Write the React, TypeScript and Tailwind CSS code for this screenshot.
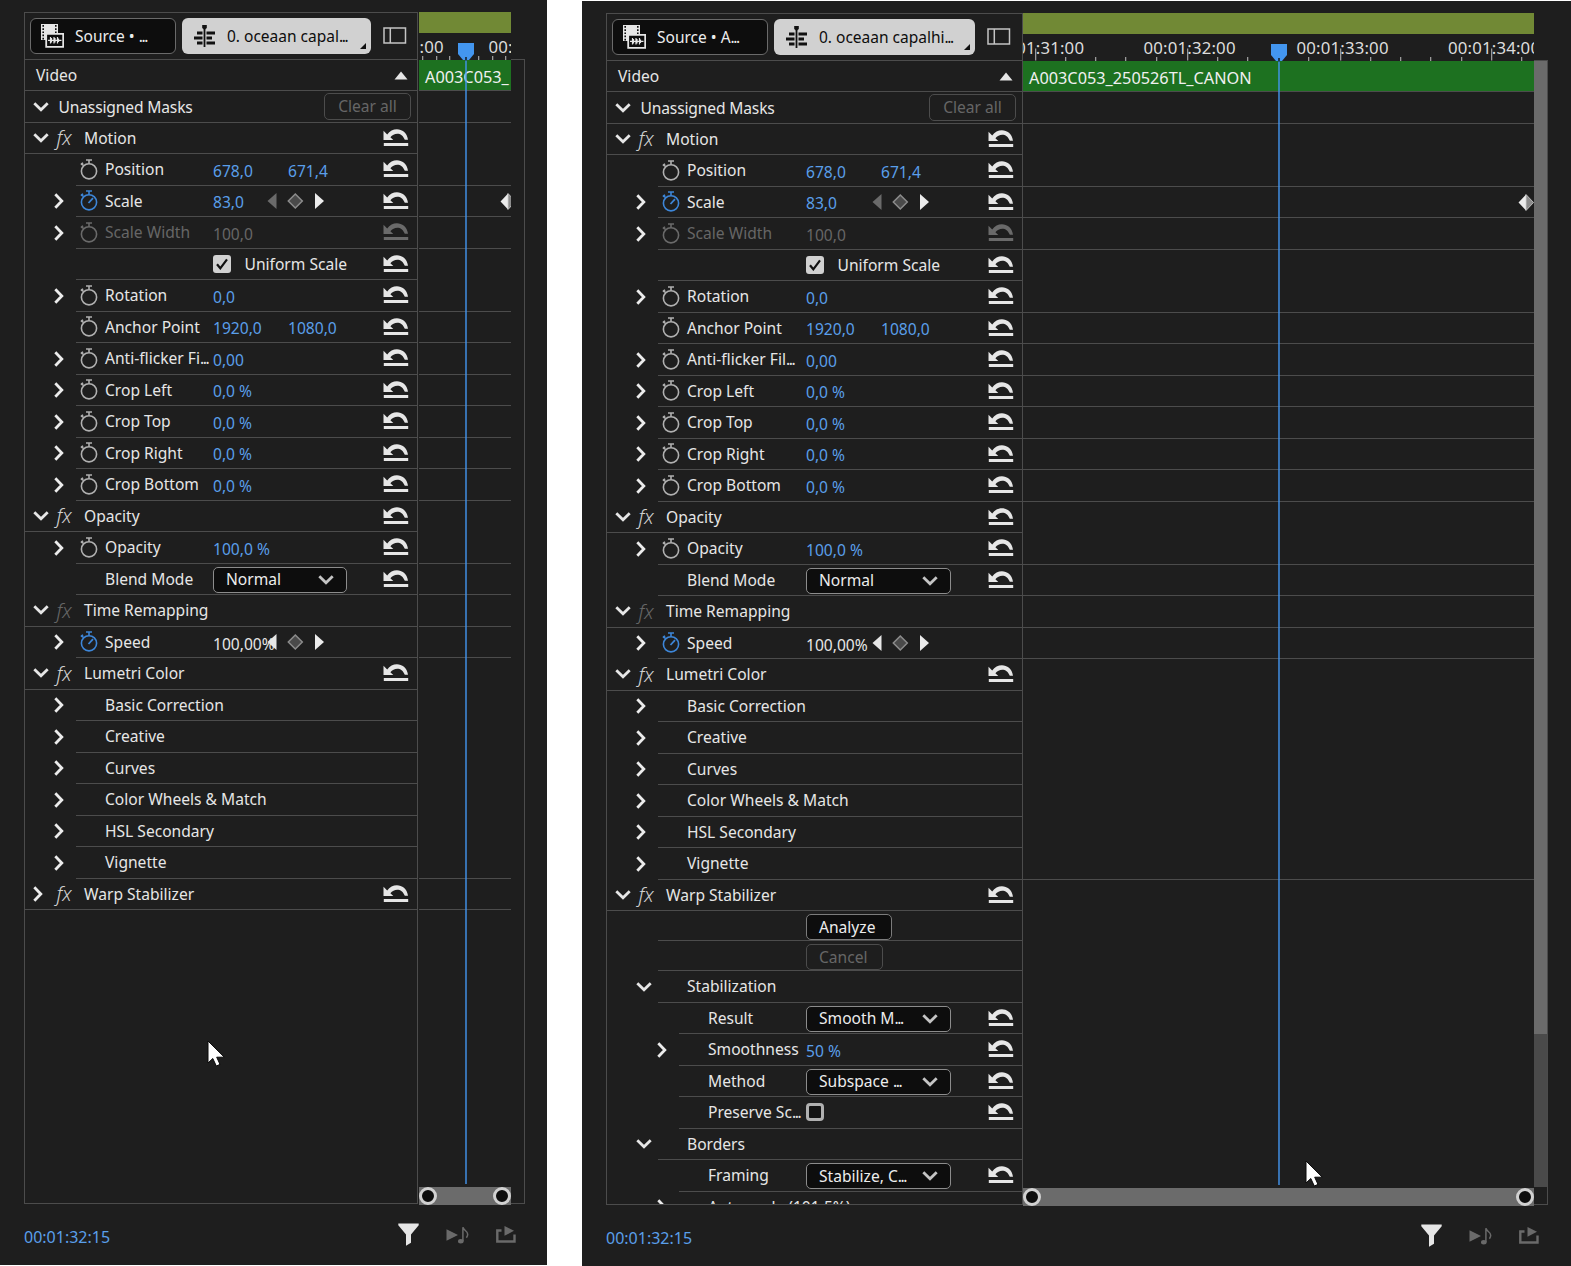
import { clsx } from 'clsx';

type Side = 'left' | 'right';

interface Row {
    kind: 'section' | 'prop' | 'group' | 'sub' | 'button';
    label: string;
    open?: boolean;
    chevron?: boolean;
    fx?: 'on' | 'off';
    watch?: 'on' | 'off';
    reset?: boolean;
    disabled?: boolean;
    values?: string[];
    plain?: boolean;
    nav?: 'next' | 'both';
    select?: string;
    check?: 'on' | 'off';
    // rule drawn under this row on the timeline side
    rule?: boolean;
    keyframe?: boolean;
}

const baseRows: Row[] = [
    { kind: 'section', label: 'Motion', open: true, fx: 'on', reset: true },
    { kind: 'prop', label: 'Position', watch: 'off', values: ['678,0', '671,4'], reset: true, rule: true },
    { kind: 'prop', label: 'Scale', chevron: true, watch: 'on', values: ['83,0'], nav: 'next', reset: true, rule: true, keyframe: true },
    { kind: 'prop', label: 'Scale Width', chevron: true, watch: 'off', values: ['100,0'], disabled: true, reset: true, rule: true },
    { kind: 'prop', label: '', check: 'on', values: ['Uniform Scale'], reset: true },
    { kind: 'prop', label: 'Rotation', chevron: true, watch: 'off', values: ['0,0'], reset: true, rule: true },
    { kind: 'prop', label: 'Anchor Point', watch: 'off', values: ['1920,0', '1080,0'], reset: true, rule: true },
    { kind: 'prop', label: 'Anti-flicker Fi...', chevron: true, watch: 'off', values: ['0,00'], reset: true, rule: true },
    { kind: 'prop', label: 'Crop Left', chevron: true, watch: 'off', values: ['0,0 %'], reset: true, rule: true },
    { kind: 'prop', label: 'Crop Top', chevron: true, watch: 'off', values: ['0,0 %'], reset: true, rule: true },
    { kind: 'prop', label: 'Crop Right', chevron: true, watch: 'off', values: ['0,0 %'], reset: true, rule: true },
    { kind: 'prop', label: 'Crop Bottom', chevron: true, watch: 'off', values: ['0,0 %'], reset: true, rule: true },
    { kind: 'section', label: 'Opacity', open: true, fx: 'on', reset: true },
    { kind: 'prop', label: 'Opacity', chevron: true, watch: 'off', values: ['100,0 %'], reset: true, rule: true },
    { kind: 'prop', label: 'Blend Mode', select: 'Normal', reset: true, rule: true },
    { kind: 'section', label: 'Time Remapping', open: true, fx: 'off', rule: true },
    { kind: 'prop', label: 'Speed', chevron: true, watch: 'on', values: ['100,00%'], plain: true, nav: 'both', rule: true },
    { kind: 'section', label: 'Lumetri Color', open: true, fx: 'on', reset: true },
    { kind: 'prop', label: 'Basic Correction', chevron: true },
    { kind: 'prop', label: 'Creative', chevron: true },
    { kind: 'prop', label: 'Curves', chevron: true },
    { kind: 'prop', label: 'Color Wheels & Match', chevron: true },
    { kind: 'prop', label: 'HSL Secondary', chevron: true },
    { kind: 'prop', label: 'Vignette', chevron: true, rule: true },
];

const leftRows: Row[] = [
    ...baseRows,
    { kind: 'section', label: 'Warp Stabilizer', fx: 'on', reset: true, rule: true },
];

const rightRows: Row[] = [
    ...baseRows.map((r) => (r.label === 'Anti-flicker Fi...' ? { ...r, label: 'Anti-flicker Fil...' } : r)),
    { kind: 'section', label: 'Warp Stabilizer', open: true, fx: 'on', reset: true },
    { kind: 'button', label: 'Analyze' },
    { kind: 'button', label: 'Cancel', disabled: true },
    { kind: 'group', label: 'Stabilization' },
    { kind: 'sub', label: 'Result', select: 'Smooth M...', reset: true },
    { kind: 'sub', label: 'Smoothness', chevron: true, values: ['50 %'], reset: true },
    { kind: 'sub', label: 'Method', select: 'Subspace ...', reset: true },
    { kind: 'sub', label: 'Preserve Sc...', check: 'off', reset: true },
    { kind: 'group', label: 'Borders' },
    { kind: 'sub', label: 'Framing', select: 'Stabilize, C...', reset: true },
    { kind: 'sub', label: 'Auto-scale (101,5%)', chevron: true },
];

const Txt = ({ children }: { children: string }) =>
    children.endsWith('...') ? (
        <>
            {children.slice(0, -3)}
            <span className="tracking-[-1.4px]">...</span>
        </>
    ) : (
        <>{children}</>
    );

const ChevronDown = ({ className }: { className?: string }) => (
    <svg className={clsx('shrink-0', className)} width="16" height="10" viewBox="0 0 16 10" fill="none">
        <path d="M1.3 1.3 8 7.8l6.7-6.5" stroke="currentColor" strokeWidth="2.8" />
    </svg>
);

const ChevronRight = () => (
    <svg className="shrink-0 text-[#ececec]" width="10" height="16" viewBox="0 0 10 16" fill="none">
        <path d="M1.3 1.3 7.8 8l-6.5 6.7" stroke="currentColor" strokeWidth="2.8" />
    </svg>
);

const ResetIcon = ({ dim }: { dim?: boolean }) => (
    <svg className={clsx('shrink-0', dim ? 'text-[#6a6a6a]' : 'text-[#e6e6e6]')} width="26" height="18" viewBox="0 0 26 18">
        <path d="M.5 1.800V11h9.800L7.400 8.200C11.200 3.300 19 2.800 21.800 10.800h3.200C23.300-1.300 9.800-2.600 4.200 5.500z" fill="currentColor" />
        <path d="M.8 14h24.400v3H.8z" fill="currentColor" />
    </svg>
);

const Stopwatch = ({ on, dim }: { on?: boolean; dim?: boolean }) => (
    <svg
        className={clsx('shrink-0', on ? 'text-[#3d86d8]' : dim ? 'text-[#6a6a6a]' : 'text-[#b0b0b0]')}
        width="18"
        height="21"
        viewBox="0 0 18 21"
        fill="none"
        stroke="currentColor"
        strokeWidth="1.6"
    >
        <circle cx="9" cy="12.3" r="7.6" />
        <path d="M6 1h6M9 1v3.5M1 4.300l2.500 2.200M1 5.800l2-2" />
        {on && <path d="m8.500 13 4.500-4.800" strokeWidth="1.8" />}
    </svg>
);

const NavButtons = ({ mode }: { mode: 'next' | 'both' }) => (
    <svg className="shrink-0" width="58" height="18" viewBox="0 0 58 18">
        <path d="M9.500 1v16L.5 9z" fill={mode === 'both' ? '#e6e6e6' : '#6a6a6a'} />
        <path d="m28.300 2 7 7-7 7-7-7z" fill="#4a4a4a" stroke="#8c8c8c" strokeWidth="1.5" />
        <path d="M48 1v16l9-8z" fill="#ececec" />
    </svg>
);

const Check = ({ on }: { on: boolean }) =>
    on ? (
        <div className="flex size-[18px] shrink-0 items-center justify-center rounded-[3px] bg-[#d1d1d1]">
            <svg width="12" height="12" viewBox="0 0 12 12" fill="none">
                <path d="m1 6.300 3.300 4L11 1.300" stroke="#111" strokeWidth="2.2" />
            </svg>
        </div>
    ) : (
        <div className="size-[18px] shrink-0 rounded-[4px] border-[3px] border-[#b0b0b0] bg-[#131313]" />
    );

const Select = ({ text, side }: { text: string; side: Side }) => (
    <div
        className={clsx(
            'mt-[2px] flex h-[26px] shrink-0 items-center justify-between rounded-[5px] border border-[#8c8c8c] bg-[#0d0d0d] pr-3 pl-3 text-[#ececec]',
            side === 'left' ? 'w-[134px]' : 'w-[145px]',
        )}
    >
        <span className="pt-px">
            <Txt>{text}</Txt>
        </span>
        <ChevronDown className="text-[#c4c4c4]" />
    </div>
);

const EffectRow = ({ row, side }: { row: Row; side: Side }) => {
    const tone = row.disabled ? 'text-[#666]' : 'text-[#e6e6e6]';

    if (row.kind === 'section') {
        return (
            <div className={clsx('flex h-[31.5px] shrink-0 items-center border-b border-[#4c4c4c] pr-[8px]', tone)}>
                <div className="flex w-[31.5px] shrink-0 pl-[7.5px]">
                    {row.open ? <ChevronDown /> : <ChevronRight />}
                </div>
                <div
                    className={clsx(
                        'w-[27.5px] shrink-0 pt-px text-[20px] leading-none font-light italic',
                        row.fx === 'off' ? 'text-[#666]' : 'text-[#d0d0d0]',
                    )}
                >
                    fx
                </div>
                <div className="flex-1 pt-[1.6px]">{row.label}</div>
                {row.reset && <ResetIcon />}
            </div>
        );
    }

    const deep = row.kind === 'sub';
    return (
        <div className={clsx('flex shrink-0', row.kind === 'button' ? 'h-[30px]' : 'h-[31.5px]', tone)}>
            <div className={clsx('flex shrink-0 items-center', deep ? 'w-[72px] pl-[49.5px]' : 'w-[51px] pl-[28.5px]')}>
                {row.chevron && <ChevronRight />}
                {row.kind === 'group' && <ChevronDown />}
            </div>
            <div className="flex min-w-0 flex-1 items-center border-b border-[#4c4c4c] pr-[8px]">
                <div
                    className={clsx(
                        'flex shrink-0 items-center whitespace-nowrap',
                        deep ? 'w-[127px] pl-[29px]' : side === 'left' ? 'w-[137px]' : 'w-[148px]',
                    )}
                >
                    {!deep && (
                        <div className="w-[29px] shrink-0 pl-[3.5px]">
                            {row.watch && <Stopwatch on={row.watch === 'on'} dim={row.disabled} />}
                        </div>
                    )}
                    {row.kind !== 'button' && (
                        <span className="pt-[1.6px]">
                            <Txt>{row.label}</Txt>
                        </span>
                    )}
                </div>
                {row.kind === 'button' && (
                    <div
                        className={clsx(
                            'mt-[3px] flex h-[26px] items-center rounded-[5px] border pt-px pl-3',
                            row.disabled ? 'w-[77px] border-[#4c4c4c]' : 'w-[86px] border-[#7c7c7c] bg-[#0d0d0d] text-[#ececec]',
                        )}
                    >
                        {row.label}
                    </div>
                )}
                {row.select && <Select text={row.select} side={side} />}
                {row.check && <Check on={row.check === 'on'} />}
                <div
                    className={clsx(
                        'flex min-w-0 flex-1 whitespace-nowrap',
                        row.check ? 'pt-[1.6px] pl-[13.5px]' : row.plain ? 'pt-[6px]' : 'pt-[4.5px]',
                        !row.disabled && !row.plain && !row.check && 'text-[#5a9fea]',
                    )}
                >
                    {row.values?.map((v) => (
                        <span key={v} className={row.values!.length > 1 ? 'w-[75px] shrink-0' : row.check ? '' : 'word-spacing'}>
                            {v}
                        </span>
                    ))}
                </div>
                {row.nav && (
                    <div className={clsx('flex', row.reset ? 'pr-[58px]' : 'pr-[84px]')}>
                        <NavButtons mode={row.nav} />
                    </div>
                )}
                {row.reset && <ResetIcon dim={row.disabled} />}
            </div>
        </div>
    );
};

const Header = ({ side }: { side: Side }) => (
    <div className="flex h-[47.5px] shrink-0 items-center border-t border-b border-[#4c4c4c] pl-[5px] text-[15.5px]">
        <div
            className={clsx(
                'flex h-9 items-center gap-[11px] rounded-[6px] border border-[#6a6a6a] bg-[#0d0d0d] pl-[10px] whitespace-nowrap text-[#ececec]',
                side === 'left' ? 'w-[146px]' : 'w-[156px]',
            )}
        >
            <svg width="23" height="24" viewBox="0 0 23 24">
                <path d="M0 0h17v16H0z" fill="#e6e6e6" />
                <path d="M2.200 1v15M14.800 1v8" stroke="#0d0d0d" strokeWidth="1.6" strokeDasharray="1.7 1.5" />
                <path d="M5.200 9.800h17v13h-17z" fill="#0d0d0d" stroke="#e6e6e6" strokeWidth="1.8" />
                <path d="M7 16.300h13.500M9.500 13v6.500M10.500 14v4.500M13 13v6.500M14 14v4.500M16.500 13v6.500M17.500 14.500v3.500" stroke="#e6e6e6" strokeWidth="1.2" />
            </svg>
            <span className="pt-[2px]">
                <Txt>{side === 'left' ? 'Source • ...' : 'Source • A...'}</Txt>
            </span>
        </div>
        <div
            className={clsx(
                'relative ml-[6px] flex h-9 items-center gap-[11px] rounded-[6px] bg-[#d1d1d1] pl-3 whitespace-nowrap text-[#0d0d0d]',
                side === 'left' ? 'w-[189px]' : 'w-[201px]',
            )}
        >
            <svg width="22" height="22" viewBox="0 0 22 22" fill="none" stroke="#111">
                <path d="M10.500 4v18" strokeWidth="1.8" />
                <path d="M8.200 0h4.600v3l-2.300 2-2.300-2z" fill="#111" stroke="none" />
                <path d="M3 8h5.500M12.500 8H21M0 13h8.500M12.500 13H18M3 18h5.500M12.500 18H21" strokeWidth="2.8" />
            </svg>
            <span className="pt-[2px]">
                <Txt>{side === 'left' ? '0. oceaan capal...' : '0. oceaan capalhi...'}</Txt>
            </span>
            <svg className="absolute right-[5px] bottom-[5px]" width="6" height="6" viewBox="0 0 6 6">
                <path d="M6 0v6H0z" fill="#111" />
            </svg>
        </div>
        <svg className="ml-3" width="24" height="17" viewBox="0 0 24 17" fill="none" stroke="#c4c4c4" strokeWidth="1.5">
            <path d="M1 1h21.500v15H1zM7.300 1v15" />
        </svg>
    </div>
);

const rulers = {
    left: {
        labels: [
            { x: 0.5, text: ':00', length: 24 },
            { x: 69.5, text: '00:01:33:00', length: 92 },
        ],
        ticks: [3, 17, 30, 59, 73, 86],
        big: [] as number[],
        head: 47,
    },
    right: {
        labels: [
            { x: -31, text: '00:01:31:00', length: 92 },
            { x: 120.5, text: '00:01:32:00', length: 92 },
            { x: 273.5, text: '00:01:33:00', length: 92 },
            { x: 425, text: '00:01:34:00', length: 92 },
        ],
        ticks: [42, 72, 102, 133, 194, 224, 285, 347, 377, 407, 438, 498],
        big: [12, 164, 317, 468],
        head: 256,
    },
};

const Timeline = ({ rows, side }: { rows: Row[]; side: Side }) => {
    const ruler = rulers[side];
    return (
        <div className={clsx('relative flex h-[1193px] shrink-0 flex-col overflow-hidden', side === 'left' ? 'ml-px w-[92px]' : 'w-[511px]')}>
            <div className="h-[21px] shrink-0 bg-[#718935]" />
            <svg className="h-[26.5px] w-full shrink-0" fill="#dcdcdc">
                {ruler.labels.map((l) => (
                    <text key={l.text} x={l.x} y="19.8" fontSize="16.8" textLength={l.length}>
                        {l.text}
                    </text>
                ))}
                {ruler.ticks.map((x) => (
                    <rect key={x} x={x} y="23" width="1.3" height="4" fill="#9a9a9a" />
                ))}
                {ruler.big.map((x) => (
                    <rect key={x} x={x} y="14.5" width="1.3" height="12" fill="#9a9a9a" />
                ))}
            </svg>
            <div className="flex h-[31.5px] shrink-0 items-center border-b border-[#4c4c4c] bg-[#1d7120] pt-[5px] pl-[6px] text-[16.3px] whitespace-nowrap text-[#f0f0f0]">
                {side === 'left' ? 'A003C053_' : 'A003C053_250526TL_CANON'}
            </div>
            <div className="h-[31.5px] shrink-0 border-b border-[#4c4c4c]" />
            {rows.slice(0, 25).map((row, i) => (
                <div key={i} className={clsx('flex h-[31.5px] shrink-0 items-center border-b', row.rule ? 'border-[#4c4c4c]' : 'border-transparent')}>
                    {row.keyframe && (
                        <svg className={clsx('mt-[2px] ml-auto shrink-0', side === 'left' && '-mr-[5px]')} width="16" height="17" viewBox="0 0 16 17">
                            <path d="M8 .5v16L.5 8.500z" fill="#ececec" />
                            <path d="M8 .5v16l7.500-8z" fill="#8c8c8c" stroke="#d0d0d0" strokeWidth=".8" />
                        </svg>
                    )}
                </div>
            ))}
            <div className="mt-auto flex h-[18px] shrink-0 items-center justify-between bg-[#6b6b6b]">
                <div className="size-[18px] rounded-full border-[3px] border-[#d1d1d1] bg-[#0d0d0d]" />
                <div className="size-[18px] rounded-full border-[3px] border-[#d1d1d1] bg-[#0d0d0d]" />
            </div>
            <svg className="absolute top-[31px] h-[1141px] w-[18px]" style={{ left: ruler.head - 9 }}>
                <path d="M1 0h16v11l-5 6H6L1 11z" fill="#4396ef" />
                <path d="M9 17v1124" stroke="#4396ef" strokeWidth="1.4" />
                <path d="M9 14v3.500" stroke="#111" strokeWidth="1.4" />
            </svg>
        </div>
    );
};

const Footer = ({ side }: { side: Side }) => (
    <div className={clsx('flex h-[61px] shrink-0 items-center text-[#6a6a6a]', side === 'left' ? 'w-[492px]' : 'w-[933px]')}>
        <div className="flex-1 pt-[4px] text-[16px] text-[#5a9fea]">00:01:32:15</div>
        <svg width="21" height="23" viewBox="0 0 21 23">
            <path d="M.3.500h20.400v1.800L13 11.500v8.300l-5 3V11.500L.3 2.300z" fill="#e6e6e6" />
        </svg>
        <svg className="ml-[27px]" width="23" height="18" viewBox="0 0 23 18">
            <path d="M.5 3.300 12 9 .5 14.700z" fill="currentColor" />
            <ellipse cx="14.8" cy="15.2" rx="2.8" ry="2.2" fill="currentColor" />
            <path d="M16.900 15V1.200c.5 3.300 4.600 3.500 4.800 7 0 1.500-.6 2.600-1.300 3.500" fill="none" stroke="currentColor" strokeWidth="1.5" />
        </svg>
        <svg className="-mt-px ml-[27px]" width="20" height="17" viewBox="0 0 20 17">
            <path d="M5.500 4.500H1.300v11h17.200v-7" fill="none" stroke="currentColor" strokeWidth="2.4" />
            <path d="M8.500 0 18 4.800 8.500 9.800z" fill="currentColor" />
        </svg>
    </div>
);

const Cursor = ({ className }: { className: string }) => (
    <svg className={clsx('absolute', className)} width="19" height="27" viewBox="0 0 19 27">
        <path d="M1 1v22l4.800-4.500L9.300 26l3.700-1.600-3.300-7.200h7.600z" fill="#fff" stroke="#0a0a0a" strokeWidth="1" />
    </svg>
);

const Panel = ({ rows, side }: { rows: Row[]; side: Side }) => (
    <div
        className={clsx(
            'relative flex h-[1265px] shrink-0 flex-col bg-[#1e1e1e] pt-3 pl-[24px]',
            side === 'left' ? 'w-[547px]' : 'mt-px w-[989px]',
        )}
    >
        <div className="flex h-[1192px] shrink-0">
            <div
                className={clsx(
                    'flex shrink-0 flex-col overflow-hidden border-r border-b border-l border-[#4c4c4c]',
                    side === 'left' ? 'w-[394px]' : 'w-[417px]',
                )}
            >
                <Header side={side} />
                <div className="flex h-[31.5px] shrink-0 items-center justify-between border-b border-[#4c4c4c] pr-[9px] pl-[11px] text-[#e6e6e6]">
                    <span className="pt-[1.6px]">Video</span>
                    <svg className="mt-px" width="14" height="9" viewBox="0 0 14 9">
                        <path d="M7 .5 13.500 8.500H.5z" fill="currentColor" />
                    </svg>
                </div>
                <div className="flex h-[31.5px] shrink-0 items-center border-b border-[#4c4c4c] pt-px pr-[6px] pl-[7.5px] text-[#e6e6e6]">
                    <ChevronDown />
                    <div className="flex-1 pt-[1.6px] pl-[10px] tracking-[-0.15px]">Unassigned Masks</div>
                    <div className="flex h-[27px] w-[87px] items-center justify-center rounded-[5px] border border-[#4c4c4c] pt-px text-[#666]">
                        Clear all
                    </div>
                </div>
                {rows.map((row, i) => (
                    <EffectRow key={i} row={row} side={side} />
                ))}
            </div>
            <Timeline rows={rows} side={side} />
            <div className="mt-[47px] flex w-[14px] flex-col border-t border-r border-b border-[#4c4c4c]">
                {side === 'right' && (
                    <div className="h-[1126px] bg-[#4a4a4a]">
                        <div className="h-[973px] bg-[#6b6b6b]" />
                    </div>
                )}
            </div>
        </div>
        <Footer side={side} />
        <Cursor className={side === 'left' ? 'top-[1040px] left-[207px]' : 'top-[1159px] left-[723px]'} />
    </div>
);

export default function App() {
    return (
        <div className="flex h-[1266px] w-[1571px] gap-[35px] overflow-hidden bg-white font-['Noto_Sans',sans-serif] text-[15.6px] leading-none">
            <Panel rows={leftRows} side="left" />
            <Panel rows={rightRows} side="right" />
        </div>
    );
}
